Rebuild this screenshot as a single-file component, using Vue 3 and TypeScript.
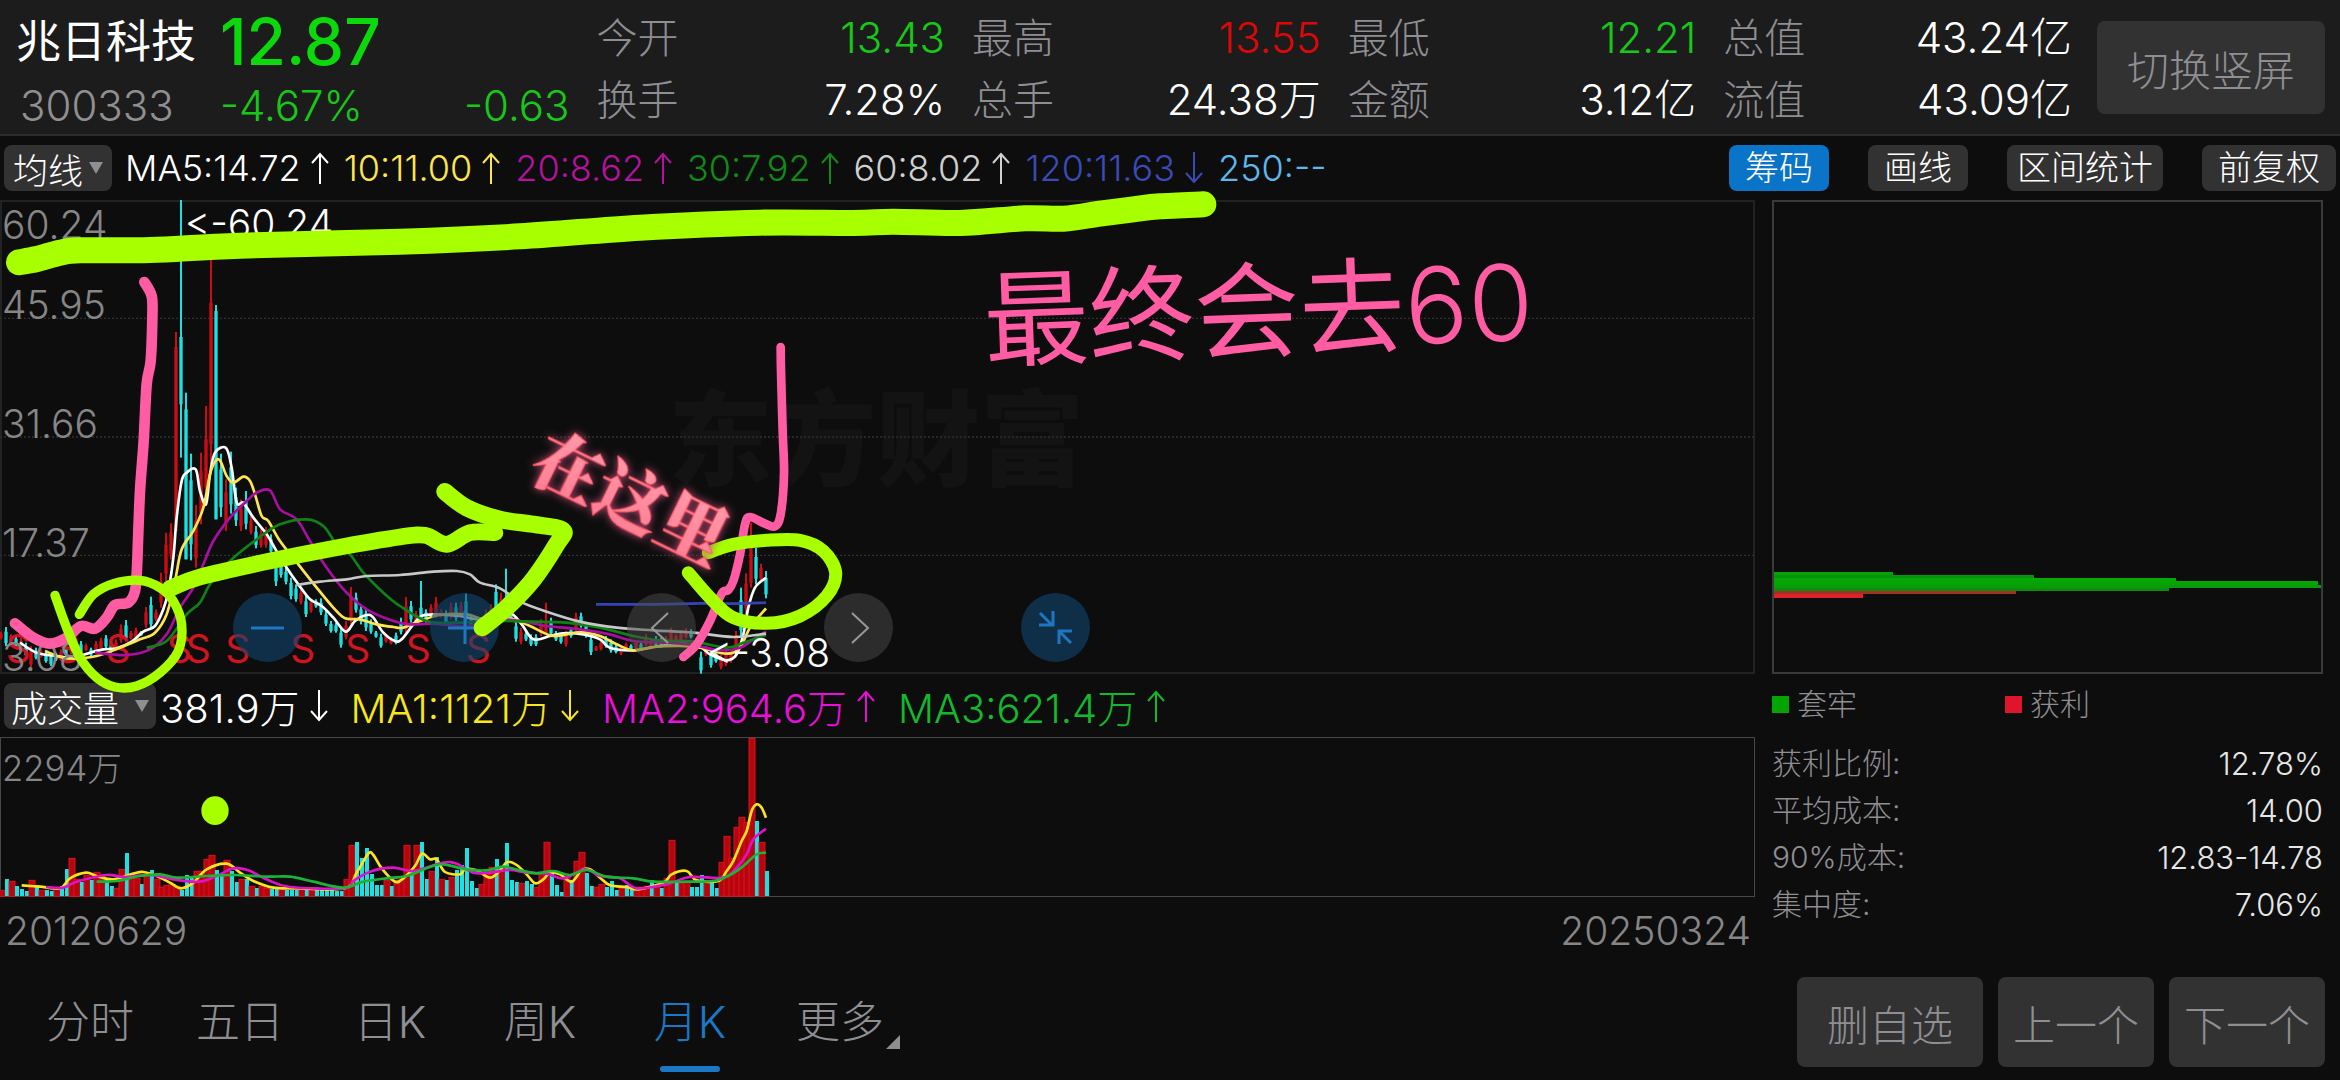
<script setup lang="ts">
type Tone = 'up' | 'down' | 'plain'
type Point = [number, number]

interface Stat { label: string; value: string; tone: Tone }
interface Average { text: string; color: string; trend?: 'rise' | 'fall' }
interface Candle { x: number; high: number; low: number; kind: string }
interface Bar { x: number; height: number; kind: string }

const stats: Stat[][] = [
  [{ label: '今开', value: '13.43', tone: 'down' }, { label: '换手', value: '7.28%', tone: 'plain' }],
  [{ label: '最高', value: '13.55', tone: 'up' }, { label: '总手', value: '24.38万', tone: 'plain' }],
  [{ label: '最低', value: '12.21', tone: 'down' }, { label: '金额', value: '3.12亿', tone: 'plain' }],
  [{ label: '总值', value: '43.24亿', tone: 'plain' }, { label: '流值', value: '43.09亿', tone: 'plain' }],
]

const priceAverages: Average[] = [
  { text: 'MA5:14.72', color: '#ffffff', trend: 'rise' },
  { text: '10:11.00', color: '#ffe650', trend: 'rise' },
  { text: '20:8.62', color: '#b4129f', trend: 'rise' },
  { text: '30:7.92', color: '#128a17', trend: 'rise' },
  { text: '60:8.02', color: '#d0d0d0', trend: 'rise' },
  { text: '120:11.63', color: '#3a4bb8', trend: 'fall' },
  { text: '250:--', color: '#5fb8ec' },
]

const volumeAverages: Average[] = [
  { text: '381.9万', color: '#ffffff', trend: 'fall' },
  { text: 'MA1:1121万', color: '#f8e71c', trend: 'fall' },
  { text: 'MA2:964.6万', color: '#e80fd8', trend: 'rise' },
  { text: 'MA3:621.4万', color: '#14b82c', trend: 'rise' },
]

const tools = [
  { name: '筹码', active: true },
  { name: '画线', active: false },
  { name: '区间统计', active: false },
  { name: '前复权', active: false },
]

const costs = [
  { label: '获利比例:', value: '12.78%' },
  { label: '平均成本:', value: '14.00' },
  { label: '90%成本:', value: '12.83-14.78' },
  { label: '集中度:', value: '7.06%' },
]

const periods = ['分时', '五日', '日K', '周K', '月K', '更多']
const activePeriod = '月K'

// Monthly candles: r rises, c falls; high and low in chart units, 15 units per month.
const earlyCandles =
  'r1322-1345 c1308-1365 r1330-1350 c1335-1370 r1340-1380 c1355-1400 r1365-1430 c1370-1405 r1375-1400 c1380-1415 ' +
  'c1385-1425 c1385-1410 r1375-1405 c1370-1395 r1340-1390 r1355-1390 c1350-1390 r1358-1380 c1370-1395 r1350-1385 ' +
  'r1340-1375 c1332-1372 c1350-1385 r1345-1380 r1300-1355 c1287-1350 r1320-1345 r1310-1345 c1320-1335 r1248-1310 ' +
  'c1217-1315 r1255-1290 r1145-1250 r1025-1170 r997-1105 r423-1020 c27-800 c605-1105 c788-1108 r942-1130 ' +
  'r785-1000 r645-900 r205-830 c342-985 c788-978 r865-1020 c782-968 c890-1005 r925-1020 c900-1015 ' +
  'r975-1030 c1005-1072 r1015-1070 r1008-1070 c1030-1090 c1095-1185 c1110-1160 c1130-1180 c1160-1225 c1180-1232 ' +
  'r1195-1240 c1215-1278 r1225-1265 c1225-1250 c1222-1272 c1260-1305 c1290-1325 c1295-1325 c1310-1370 r1290-1345 ' +
  'r1188-1300 c1205-1265 c1240-1300 c1250-1320 c1285-1328 c1320-1340 c1328-1370 r1330-1355 r1338-1360 c1325-1360 '
const lateCandles =
  'c1280-1330 r1218-1330 c1230-1295 r1260-1300 c1170-1290 c1255-1295 r1240-1280 r1218-1280 r1255-1280 c1258-1300 ' +
  'r1235-1285 c1235-1290 r1233-1280 c1208-1300 c1270-1310 c1285-1320 r1280-1305 r1255-1300 r1240-1295 c1180-1270 ' +
  'r1205-1280 c1133-1250 c1240-1290 c1290-1352 r1310-1360 c1320-1350 c1330-1365 c1330-1365 r1285-1335 r1235-1330 ' +
  'c1280-1335 c1320-1350 c1325-1358 r1320-1367 c1310-1340 r1265-1320 c1265-1310 c1295-1340 c1330-1392 r1365-1380 ' +
  'r1350-1378 c1335-1370 c1345-1385 c1360-1387 r1362-1392 r1355-1380 c1360-1380 r1350-1375 c1355-1375 r1330-1365 ' +
  'r1345-1370 c1335-1370 c1340-1370 r1335-1365 r1310-1360 r1330-1355 r1320-1355 r1312-1342 c1315-1342 r1340-1380 ' +
  'c1382-1448 r1365-1395 c1375-1430 c1380-1415 r1390-1435 r1380-1425 r1375-1415 r1320-1400 c1190-1340 r1147-1270 ' +
  'r995-1190 c1070-1180 r1118-1170 c1140-1222'

const candles: Candle[] = (earlyCandles + lateCandles).split(' ').map((entry, i) => {
  const [high, low] = entry.slice(1).split('-').map(Number)
  return { x: 3 + i * 15, high, low, kind: entry[0] }
})

// Real bodies that are visibly shorter than their wick.
const bodies: Record<number, Point> = {
  35: [468, 1020], 36: [438, 640], 37: [655, 1105], 41: [745, 890], 42: [335, 760], 43: [360, 985],
  84: [1250, 1290], 101: [1225, 1250], 109: [1295, 1330], 150: [1065, 1175],
}
const bodyTop = (c: Candle, i: number) => bodies[i]?.[0] ?? c.high + Math.round((c.low - c.high) * 0.25)
const bodyHeight = (c: Candle, i: number) =>
  (bodies[i]?.[1] ?? c.low - Math.round((c.low - c.high) * 0.15)) - bodyTop(c, i)

const volumeData =
  'r6 c17 r15 c10 c7 c5 r16 c11 r6 c6 c5 r7 c10 c27 r38 r17 c14 r21 c16 r24 r20 c18 c10 r8 r27 c43 r22 r18 c12 r21 ' +
  'c26 r17 r9 r11 r12 r10 c6 c21 c20 r25 r25 r37 r41 c26 c22 r36 c25 c14 r17 c17 r10 c8 r10 r8 c7 c8 r8 c6 c6 c6 ' +
  'r8 c7 r8 c7 c7 c6 c6 c5 c5 r17 r51 c54 c38 c48 c22 c11 c11 r16 c10 r16 r17 r51 c25 r51 c54 c17 r25 c39 r17 c16 ' +
  'r19 c26 c31 c48 c15 c8 r12 r24 r29 c37 r28 c53 c16 c14 r13 c15 c12 r9 r24 r54 c23 c11 c4 r20 c16 r35 r44 c23 c10 r9 ' +
  'r12 c9 c15 c6 r8 c11 c7 r9 r9 r10 c16 r11 c8 r18 r56 c16 r13 r14 c9 c9 c21 r14 c15 c8 r34 r60 r38 r69 r79 r74 ' +
  'r158 c75 r54 c25'
const volumes: Bar[] = volumeData.split(' ').map((entry, i) => ({
  x: 6 + i * 15,
  height: Number(entry.slice(1)) * 3,
  kind: entry[0],
}))

const parse = (text: string): Point[] => text.split(' ').map((p) => p.split(',').map(Number) as Point)

// Catmull-Rom spline through the given points.
function curve(text: string): string {
  const p = parse(text)
  let d = `M${p[0][0]} ${p[0][1]}`
  for (let i = 0; i < p.length - 1; i++) {
    const a = p[Math.max(i - 1, 0)]
    const b = p[i]
    const c = p[i + 1]
    const e = p[Math.min(i + 2, p.length - 1)]
    const n = (v: number) => v.toFixed(1)
    d += `C${n(b[0] + (c[0] - a[0]) / 6)} ${n(b[1] + (c[1] - a[1]) / 6)} ${n(c[0] - (e[0] - b[0]) / 6)} ${n(c[1] - (e[1] - b[1]) / 6)} ${c[0]} ${c[1]}`
  }
  return d
}

const priceLines = [
  { color: '#ffffff', d: curve('60,1355 110,1385 170,1395 220,1400 270,1385 310,1375 350,1372 395,1352 430,1322 465,1305 490,1255 505,1200 520,1100 530,980 545,870 560,845 587,835 600,900 618,940 630,850 645,785 678,771 695,830 710,935 730,935 760,980 800,1030 835,1090 860,1130 895,1180 930,1225 965,1245 1000,1280 1037,1322 1065,1290 1100,1272 1120,1280 1150,1325 1185,1350 1205,1345 1240,1300 1265,1275 1300,1270 1380,1275 1430,1285 1480,1275 1530,1265 1565,1300 1600,1345 1650,1335 1690,1327 1750,1330 1800,1345 1830,1370 1900,1378 1980,1365 2040,1358 2100,1368 2130,1390 2180,1408 2210,1390 2230,1330 2245,1250 2265,1190 2298,1160') },
  { color: '#ffe650', d: curve('135,1380 200,1402 290,1395 360,1370 420,1345 465,1325 500,1270 525,1170 545,1075 580,1020 610,950 630,850 645,812 660,808 680,855 700,875 730,857 750,870 765,910 785,975 805,990 840,1050 895,1120 950,1190 1000,1250 1035,1282 1080,1285 1130,1300 1180,1308 1210,1310 1260,1290 1320,1272 1400,1270 1450,1285 1530,1283 1590,1305 1660,1335 1740,1323 1800,1335 1850,1360 1900,1378 1960,1368 2040,1365 2100,1370 2180,1388 2220,1370 2250,1310 2298,1252') },
  { color: '#a80fa0', d: curve('285,1385 380,1392 450,1375 500,1330 540,1250 580,1190 610,1120 640,1050 690,980 735,935 770,905 810,898 840,955 890,985 930,1050 980,1130 1040,1205 1100,1255 1180,1290 1230,1300 1300,1298 1400,1305 1480,1285 1560,1290 1640,1305 1740,1315 1830,1330 1900,1350 2000,1355 2080,1362 2160,1378 2220,1370 2260,1345 2298,1322') },
  { color: '#0f8216', d: curve('440,1370 500,1350 560,1270 600,1235 630,1180 690,1110 770,1045 840,1000 920,985 970,1005 1010,1060 1050,1090 1090,1145 1150,1205 1200,1245 1280,1290 1360,1295 1500,1290 1600,1292 1700,1295 1800,1310 1900,1335 1980,1348 2080,1352 2180,1370 2230,1355 2298,1332') },
  { color: '#c8c8c8', d: curve('890,1182 960,1172 1040,1165 1100,1155 1200,1152 1300,1142 1370,1140 1410,1150 1440,1175 1500,1192 1560,1232 1640,1262 1740,1292 1850,1310 1960,1318 2080,1325 2200,1338 2298,1328') },
  { color: '#3344ba', d: curve('1788,1240 1950,1240 2100,1237 2200,1238 2298,1235') },
]

const volumeLines = [
  { color: '#ffe41c', d: curve('65,643 120,647 180,652 210,622 258,605 290,615 340,625 400,608 430,603 470,615 510,635 543,652 580,635 620,595 680,578 720,605 760,630 820,650 900,652 1035,652 1070,605 1105,548 1120,552 1145,592 1185,632 1210,622 1245,585 1266,548 1290,565 1310,565 1335,603 1380,610 1395,595 1430,598 1470,620 1500,598 1522,573 1550,582 1580,610 1605,637 1630,625 1650,605 1680,610 1715,632 1745,597 1770,595 1800,620 1830,643 1880,648 1915,655 1990,635 2015,610 2060,600 2090,628 2155,630 2180,600 2200,570 2225,510 2240,480 2255,420 2270,400 2285,410 2298,440') },
  { color: '#e012c8', d: curve('138,648 190,650 230,632 320,612 370,618 450,612 520,625 600,632 660,610 700,592 745,598 800,625 870,648 1030,652 1060,630 1110,602 1180,590 1240,600 1330,575 1370,578 1420,605 1470,605 1530,597 1580,605 1640,608 1690,622 1755,595 1800,615 1860,622 1910,652 2000,640 2070,618 2170,620 2210,590 2240,550 2260,505 2298,473') },
  { color: '#1cb438', d: curve('290,632 350,630 420,615 480,610 530,620 620,615 700,612 800,617 870,617 940,632 1030,650 1090,632 1160,622 1220,615 1290,588 1330,580 1400,595 1460,598 1510,587 1560,598 1610,607 1660,600 1710,612 1760,597 1820,617 1900,622 1960,632 2060,632 2140,630 2190,612 2230,585 2270,550 2298,545') },
]

const lime = '#a8ff00'
const pink = '#ff5ca4'
const strokes = [
  { color: pink, width: 32, d: curve('433,273 455,315 457,380 452,510 440,580 431,750 420,900 414,1050 411,1130 405,1200 385,1235 345,1242 320,1280 285,1313 243,1305 200,1340 150,1358 100,1340 45,1297') },
  { color: lime, width: 78, d: curve('57,214 110,204 180,185 240,178 450,177 720,164 1200,152 1560,136 1920,110 2280,95 2560,96 2680,92 2880,96 3075,82 3190,83 3300,68 3400,55 3480,46 3610,40') },
  { color: lime, width: 28, d: curve('165,1213 200,1310 240,1400 290,1460 345,1488 410,1485 480,1445 535,1380 545,1300 520,1230 480,1190 420,1168 340,1178 280,1210 238,1270') },
  { color: lime, width: 50, d: curve('510,1192 600,1158 800,1112 1000,1072 1200,1038 1275,1033 1340,1060 1410,1025 1485,1025') },
  { color: lime, width: 52, d: curve('1335,902 1400,950 1500,985 1600,1000 1688,1018 1670,1060 1600,1165 1520,1250 1447,1310') },
  { color: pink, width: 26, d: curve('2342,468 2343,540 2348,720 2352,850 2342,970 2325,1006 2295,998 2250,978 2235,1000 2220,1090 2200,1170 2184,1198 2165,1208 2130,1290 2090,1360 2050,1398') },
  { color: lime, width: 39, d: curve('2125,1085 2200,1060 2300,1048 2400,1048 2470,1080 2507,1145 2480,1215 2400,1275 2300,1297 2200,1280 2130,1220 2065,1145') },
]

const priceScale = [
  { text: '60.24', y: 145 },
  { text: '45.95', y: 385 },
  { text: '31.66', y: 742 },
  { text: '17.37', y: 1097 },
  { text: '3.08', y: 1440 },
]
const sellMarks = [55, 203, 355, 538, 595, 713, 908, 1073, 1255, 1435]

const chipRows = [
  { y: 372, h: 3, w: 120, fill: '#08a008' },
  { y: 375, h: 3, w: 261, fill: '#07930a' },
  { y: 378, h: 3, w: 403, fill: '#05a805' },
  { y: 381, h: 4, w: 545, fill: '#04a404' },
  { y: 385, h: 3, w: 549, fill: '#0a9a0a' },
  { y: 388, h: 3, w: 396, fill: '#0a8e0c' },
  { y: 391, h: 3, w: 243, fill: '#a03226' },
  { y: 394, h: 4, w: 90, fill: '#e0202c' },
]
</script>

<template>
  <main class="page">
    <header class="quote">
      <div class="stock">
        <h1 class="name">兆日科技</h1>
        <strong class="price">12.87</strong>
        <span class="code">300333</span>
        <div class="change"><span>-4.67%</span><span>-0.63</span></div>
      </div>
      <dl v-for="(column, c) in stats" :key="c" class="stats">
        <div v-for="item in column" :key="item.label" class="stat">
          <dt>{{ item.label }}</dt>
          <dd :class="item.tone">{{ item.value }}</dd>
        </div>
      </dl>
      <button type="button" class="rotate">切换竖屏</button>
    </header>

    <section class="toolbar">
      <button type="button" class="picker">
        均线<svg class="caret" viewBox="0 0 14 12" aria-hidden="true"><path d="M0 0H14L7 12Z" /></svg>
      </button>
      <ul class="averages">
        <li v-for="item in priceAverages" :key="item.text" :style="{ color: item.color }">
          {{ item.text }}
          <svg v-if="item.trend" :class="['trend', item.trend]" viewBox="0 0 18 32" aria-hidden="true">
            <path d="M9 32V2M1 11L9 2L17 11" />
          </svg>
        </li>
      </ul>
      <nav class="tools">
        <button
          v-for="tool in tools"
          :key="tool.name"
          type="button"
          :class="{ active: tool.active, long: tool.name.length > 3 }"
        >
          {{ tool.name }}
        </button>
      </nav>
    </section>

    <div class="body">
      <div class="charts">
        <section class="price-chart">
          <svg class="plot" viewBox="0 27 5265 1422" role="img" aria-label="月K线">
            <text class="watermark" x="2005" y="862">东方财富</text>
            <g class="grid">
              <path d="M0 382H5265M0 738H5265M0 1093H5265" />
            </g>
            <g v-for="(c, i) in candles" :key="i" :class="c.kind === 'r' ? 'rise-fill' : 'fall-fill'">
              <rect :x="c.x - 3" :y="c.high" width="6" :height="c.low - c.high" />
              <rect :x="c.x - 5" :y="bodyTop(c, i)" width="10" :height="bodyHeight(c, i)" />
            </g>
            <text v-for="x in sellMarks" :key="x" class="sell" :x="x" y="1415">S</text>
            <path v-for="line in priceLines" :key="line.color" class="ma" :d="line.d" :stroke="line.color" />
            <text v-for="tick in priceScale" :key="tick.text" class="tick" x="6" :y="tick.y">{{ tick.text }}</text>
            <text class="extreme" x="554" y="140">&lt;-60.24</text>
            <text class="extreme" x="2120" y="1427">&lt;-3.08</text>
          </svg>

          <div class="controls">
            <button type="button" class="round blue" aria-label="缩小">
              <svg viewBox="0 0 69 69"><path d="M18 35H51" /></svg>
            </button>
            <button type="button" class="round blue" aria-label="放大">
              <svg viewBox="0 0 69 69"><path d="M18 35H51M35 18V51" /></svg>
            </button>
            <button type="button" class="round" aria-label="左移">
              <svg viewBox="0 0 69 69"><path d="M41 20L25 35L41 50" /></svg>
            </button>
            <button type="button" class="round" aria-label="右移">
              <svg viewBox="0 0 69 69"><path d="M28 20L44 35L28 50" /></svg>
            </button>
            <button type="button" class="round blue" aria-label="收起">
              <svg viewBox="0 0 69 69"><path d="M19 20L31 32M18 32H32V18M50 50L38 38M51 38H38V51" /></svg>
            </button>
          </div>

          <svg class="notes" viewBox="0 27 5265 1422" aria-hidden="true">
            <defs>
              <linearGradient id="rose" x1="0" y1="0" x2="0" y2="1">
                <stop offset="0" stop-color="#ffa0b0" />
                <stop offset="1" stop-color="#ff7a90" />
              </linearGradient>
            </defs>
            <path v-for="(s, i) in strokes" :key="i" :d="s.d" :stroke="s.color" :stroke-width="s.width" />
            <ellipse cx="645" cy="1859" rx="41" ry="43" :fill="lime" />
            <text class="target" x="2955" y="504" transform="rotate(-2 2955 504)">最终会去<tspan class="goal">60</tspan></text>
            <text class="here" x="1892" y="1000" transform="rotate(26 1892 924)">在这里</text>
          </svg>
        </section>

        <section class="toolbar volume-bar">
          <button type="button" class="picker wide">
            成交量<svg class="caret" viewBox="0 0 14 12" aria-hidden="true"><path d="M0 0H14L7 12Z" /></svg>
          </button>
          <ul class="averages large">
            <li v-for="item in volumeAverages" :key="item.text" :style="{ color: item.color }">
              {{ item.text }}
              <svg v-if="item.trend" :class="['trend', item.trend]" viewBox="0 0 18 32" aria-hidden="true">
                <path d="M9 32V2M1 11L9 2L17 11" />
              </svg>
            </li>
          </ul>
        </section>

        <section class="volume-chart">
          <svg class="plot" viewBox="0 198 5265 480" role="img" aria-label="成交量">
            <template v-for="(b, i) in volumes" :key="i">
              <rect v-if="b.kind === 'c'" class="fall-fill" :x="b.x - 6" :y="675 - b.height" width="12" :height="b.height" />
              <rect v-else class="rise-bar" :x="b.x - 9" :y="676 - b.height" width="18" :height="b.height" />
            </template>
            <path v-for="line in volumeLines" :key="line.color" class="ma" :d="line.d" :stroke="line.color" />
            <text class="tick amount" x="6" y="330">2294万</text>
          </svg>
        </section>

        <footer class="dates"><time>20120629</time><time>20250324</time></footer>
      </div>

      <aside class="chips">
        <svg class="profile" viewBox="0 0 551 474" role="img" aria-label="筹码分布">
          <rect v-for="row in chipRows" :key="row.y" x="1" :y="row.y" :width="row.w" :height="row.h" :fill="row.fill" />
          <rect class="frame" x="1" y="1" width="549" height="472" />
        </svg>
        <div class="legend">
          <span><i class="swatch green"></i>套牢</span>
          <span><i class="swatch red"></i>获利</span>
        </div>
        <dl class="costs">
          <div v-for="row in costs" :key="row.label">
            <dt>{{ row.label }}</dt>
            <dd>{{ row.value }}</dd>
          </div>
        </dl>
      </aside>
    </div>

    <div class="bottom">
      <nav class="periods">
        <a v-for="period in periods" :key="period" href="#" :class="{ current: period === activePeriod }">
          {{ period }}
          <svg v-if="period === '更多'" class="corner" viewBox="0 0 14 14" aria-hidden="true"><path d="M14 0V14H0Z" /></svg>
        </a>
      </nav>
      <div class="actions">
        <button type="button" class="delete">删自选</button>
        <button type="button">上一个</button>
        <button type="button">下一个</button>
      </div>
    </div>
  </main>
</template>

<style>
body {
  margin: 0;
  background: #0d0d0d;
}
</style>

<style scoped>
.page {
  font-family: Inter, "Noto Sans CJK SC", sans-serif;
  font-weight: 300;
  color: #fff;
  background: #0d0d0d;
}
button {
  border: 0;
  padding: 0;
  font: inherit;
  color: inherit;
  background: #323232;
  border-radius: 8px;
  white-space: nowrap;
}
dl, dd, ul, h1 {
  margin: 0;
  padding: 0;
}
ul {
  list-style: none;
}

.quote {
  display: flex;
  align-items: center;
  height: 136px;
  padding: 0 15px 0 16px;
  background: #1c1c1c;
  border-bottom: 2px solid #2b2b2b;
  box-sizing: border-box;
}
.stock {
  flex: 554 1 0;
  display: grid;
  grid-template-columns: 204px 1fr;
  align-items: center;
  grid-template-rows: 70px 56px;
  padding-top: 6px;
}
.name {
  font-size: 45px;
  line-height: 60px;
  font-weight: 400;
  white-space: nowrap;
}
.price {
  font-size: 64px;
  line-height: 64px;
  font-weight: 500;
  color: #0bd90b;
}
.code {
  padding-left: 4px;
  font-size: 42px;
  color: #909090;
}
.change {
  display: flex;
  justify-content: space-between;
  font-size: 42px;
  color: #18c818;
}
.stats {
  flex: 349 1 0;
  margin-left: 27px;
  padding-top: 4px;
}
.stat {
  display: flex;
  justify-content: space-between;
  line-height: 62px;
  font-size: 41px;
  white-space: nowrap;
}
.stat dt {
  color: #8e8e93;
}
.stat dd {
  font-size: 42px;
}
.up {
  color: #dc0808;
}
.down {
  color: #18c818;
}
.rotate {
  flex: none;
  width: 228px;
  height: 93px;
  margin-left: 25px;
  font-size: 42px;
  color: #8e8e93;
}

.toolbar {
  display: flex;
  align-items: center;
  height: 64px;
  padding: 0 4px;
}
.picker {
  display: flex;
  align-items: center;
  justify-content: center;
  gap: 6px;
  width: 108px;
  height: 46px;
  font-size: 35px;
}
.picker.wide {
  width: 152px;
  gap: 16px;
  font-size: 36px;
}
.caret {
  width: 14px;
  height: 12px;
  fill: #8e8e93;
}
.averages {
  display: flex;
  gap: 15px;
  margin-left: 13px;
  font-size: 36px;
  white-space: nowrap;
}
.averages.large {
  gap: 23px;
  margin-left: 4px;
  font-size: 40px;
}
.averages li {
  display: flex;
  align-items: center;
  gap: 10px;
}
.trend {
  width: 18px;
  height: 32px;
  fill: none;
  stroke: currentColor;
  stroke-width: 2;
}
.trend.fall {
  transform: rotate(180deg);
}
.tools {
  display: flex;
  gap: 39px;
  margin-left: auto;
}
.tools button {
  height: 46px;
  padding: 0 16px;
  font-size: 34px;
  line-height: 46px;
}
.tools .long {
  padding: 0 10px;
}
.tools .active {
  background: #0a74c8;
}

.body {
  display: grid;
  grid-template-columns: minmax(0, 1755fr) minmax(0, 585fr);
}
.plot {
  display: block;
  width: 100%;
  overflow: visible;
}
.price-chart {
  position: relative;
  box-shadow: inset 0 0 0 2px #222;
}
.grid {
  fill: none;
  stroke: #303030;
  stroke-width: 4;
  stroke-dasharray: 6 6;
}
.watermark {
  font-size: 312px;
  font-weight: 900;
  fill: #131313;
}
.rise-fill {
  fill: #cc0c14;
}
.fall-fill {
  fill: #1fe0e0;
}
.rise-bar {
  fill: #b8040c;
  stroke: #d81420;
  stroke-width: 3;
}
.ma {
  fill: none;
  stroke-width: 8;
  stroke-linejoin: round;
}
.sell {
  font-size: 117px;
  font-weight: 400;
  text-anchor: middle;
  fill: #d01420;
}
.tick {
  font-size: 117px;
  fill: #868686;
}
.tick.amount {
  font-size: 104px;
}
.extreme {
  font-size: 117px;
  fill: #fff;
}
.controls {
  position: absolute;
  left: 233px;
  bottom: 12px;
  display: flex;
  gap: 128px;
}
.round {
  width: 69px;
  height: 69px;
  border-radius: 50%;
  background: rgba(75, 75, 75, 0.5);
}
.round svg {
  display: block;
  fill: none;
  stroke: #98989c;
  stroke-width: 2;
}
.round.blue {
  background: rgba(16, 68, 110, 0.6);
}
.round.blue svg {
  stroke: #1e76c0;
  stroke-width: 3;
}
.notes {
  position: absolute;
  inset: 0;
  z-index: 1;
  width: 100%;
  overflow: visible;
  fill: none;
  stroke-linecap: round;
  stroke-linejoin: round;
  pointer-events: none;
}
.target {
  font-size: 316px;
  font-weight: 400;
  fill: #ff5ca4;
}
.goal {
  font-weight: 300;
}
.here {
  font-family: "Noto Serif CJK SC", "Noto Sans CJK SC", serif;
  font-size: 208px;
  font-weight: 900;
  text-anchor: middle;
  fill: url(#rose);
  stroke: #ff5560;
  stroke-width: 3;
  filter: drop-shadow(0 0 12px #c04a7a);
}
.volume-bar {
  height: 63px;
}
.volume-chart {
  box-shadow: inset 0 0 0 1px #484848;
}
.dates {
  display: flex;
  justify-content: space-between;
  padding: 11px 4px 9px 5px;
  font-size: 39px;
  line-height: 46px;
  color: #868686;
}

.chips {
  padding: 0 17px;
}
.profile {
  display: block;
  width: 100%;
}
.frame {
  fill: none;
  stroke: #3a3a3a;
  stroke-width: 2;
}
.legend {
  display: grid;
  grid-template-columns: 233px 1fr;
  margin-top: 8px;
  font-size: 30px;
  line-height: 44px;
  color: #8e8e93;
}
.legend span {
  display: flex;
  align-items: center;
  gap: 8px;
}
.swatch {
  width: 17px;
  height: 17px;
}
.green {
  background: #04a404;
}
.red {
  background: #e0142c;
}
.costs {
  margin-top: 14px;
  font-size: 30px;
  line-height: 47px;
}
.costs div {
  display: flex;
  justify-content: space-between;
}
.costs dt {
  color: #8e8e93;
}
.costs dd {
  font-size: 31px;
  color: #e6e6e6;
}

.bottom {
  display: flex;
  align-items: center;
  justify-content: space-between;
  height: 118px;
  padding: 0 15px;
  box-sizing: border-box;
}
.periods {
  display: flex;
}
.periods a {
  position: relative;
  width: 150px;
  font-size: 44px;
  line-height: 100px;
  text-align: center;
  text-decoration: none;
  color: #8e8e93;
}
.periods .current {
  color: #1b78c4;
}
.periods .current::after {
  content: "";
  position: absolute;
  left: 45px;
  bottom: 0;
  width: 60px;
  height: 6px;
  border-radius: 3px;
  background: #1b78c4;
}
.corner {
  position: absolute;
  right: 15px;
  bottom: 23px;
  width: 14px;
  height: 14px;
  fill: #8e8e93;
}
.actions {
  display: flex;
  gap: 15px;
}
.actions button {
  width: 156px;
  height: 90px;
  font-size: 42px;
  color: #8e8e93;
}
.actions .delete {
  width: 186px;
}
</style>
